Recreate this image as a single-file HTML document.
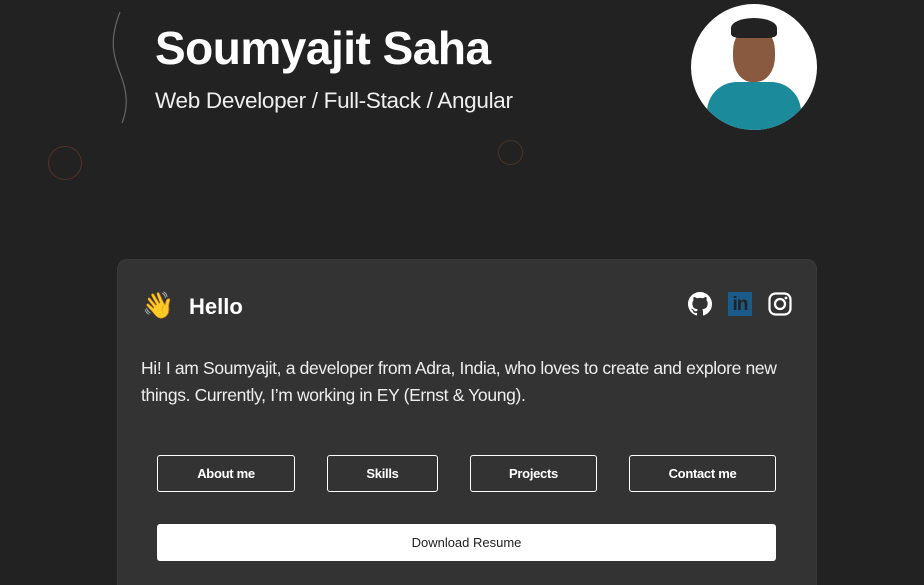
<!DOCTYPE html>
<html><head><style>
*{margin:0;padding:0;box-sizing:border-box}
html,body{width:924px;height:585px;overflow:hidden}
body{background:#222;position:relative;font-family:"Liberation Sans",sans-serif;color:#fff}
.abs{position:absolute}
h1{position:absolute;left:155px;top:21px;font-size:46px;font-weight:bold;letter-spacing:-0.5px}
.sub{position:absolute;left:155px;top:88px;font-size:22.5px;color:#eee;letter-spacing:-0.3px}
.avatar{position:absolute;left:691px;top:4px;width:126px;height:126px;border-radius:50%;background:#fff;overflow:hidden}
.card{position:absolute;left:117px;top:259px;width:700px;height:326px;background:#333;border-radius:10px 10px 0 0;border:1px solid #3a3a3a;border-bottom:none}
.btn{position:absolute;top:455px;height:37px;border:1px solid #fff;border-radius:3px;font-size:13px;font-weight:bold;display:flex;align-items:center;justify-content:center;letter-spacing:-0.3px}
</style></head><body>
<svg class="abs" style="left:110px;top:8px" width="30" height="120"><path d="M10 4 C0 30,2 45,10 65 C18 85,18 100,12 115" stroke="#666" stroke-width="1.2" fill="none"/></svg>
<div class="abs" style="left:48px;top:146px;width:34px;height:34px;border-radius:50%;border:1.5px solid #5a3024"></div>
<div class="abs" style="left:498px;top:140px;width:25px;height:25px;border-radius:50%;border:1.5px solid #4a3322"></div>
<h1>Soumyajit Saha</h1>
<div class="sub">Web Developer / Full-Stack / Angular</div>
<div class="avatar">
<div class="abs" style="left:16px;top:78px;width:94px;height:60px;background:#1b8a9a;border-radius:30px 30px 0 0"></div>
<div class="abs" style="left:42px;top:22px;width:42px;height:56px;background:#8a5a40;border-radius:45%"></div>
<div class="abs" style="left:40px;top:14px;width:46px;height:20px;background:#222;border-radius:50% 50% 20% 20%"></div>
</div>
<div class="card"></div>
<div class="abs" style="left:142px;top:290px;font-size:26px">👋</div>
<div class="abs" style="left:189px;top:294px;font-size:22px;font-weight:bold">Hello</div>
<svg class="abs" style="left:688px;top:292px" width="24" height="24" viewBox="0 0 16 16"><path fill="#fff" d="M8 0C3.58 0 0 3.58 0 8c0 3.540 2.290 6.530 5.470 7.590.4.07.55-.17.55-.38v-1.33c-2.23.48-2.7-1.07-2.7-1.07-.36-.93-.89-1.170-.89-1.170-.73-.5.06-.49.06-.49.8.06 1.23.83 1.23.83.71 1.22 1.87.87 2.33.66.07-.52.28-.87.5-1.070-1.780-.2-3.640-.89-3.640-3.950 0-.87.31-1.590.82-2.150-.08-.2-.36-1.020.08-2.120 0 0 .67-.21 2.2.82a7.6 7.6 0 014 0c1.53-1.040 2.2-.82 2.2-.82.44 1.1.16 1.920.08 2.120.51.56.82 1.270.82 2.150 0 3.070-1.870 3.750-3.650 3.950.29.25.54.73.54 1.480v2.2c0 .21.15.46.55.38A8.01 8.01 0 0016 8c0-4.42-3.58-8-8-8z"/></svg>
<div class="abs" style="left:728px;top:292px;width:24px;height:24px;background:#1a5b8a;color:#222;font-weight:bold;font-size:19px;line-height:26px;text-align:center;letter-spacing:-1px">in</div>
<svg class="abs" style="left:768px;top:292px" width="24" height="24" viewBox="0 0 24 24"><rect x="1.5" y="1.5" width="21" height="21" rx="6" fill="none" stroke="#fff" stroke-width="2.2"/><circle cx="12" cy="12" r="5" fill="none" stroke="#fff" stroke-width="2.2"/><circle cx="18" cy="6" r="1.4" fill="#fff"/></svg>
<div class="abs" style="left:141px;top:355px;width:660px;font-size:17.5px;line-height:27px;color:#eee;letter-spacing:-0.35px">Hi! I am Soumyajit, a developer from Adra, India, who loves to create and explore new things. Currently, I’m working in EY (Ernst &amp; Young).</div>
<div class="btn" style="left:157px;width:138px">About me</div>
<div class="btn" style="left:327px;width:111px">Skills</div>
<div class="btn" style="left:470px;width:127px">Projects</div>
<div class="btn" style="left:629px;width:147px">Contact me</div>
<div class="abs" style="left:157px;top:524px;width:619px;height:37px;background:#fff;border-radius:3px;color:#222;font-size:13px;display:flex;align-items:center;justify-content:center">Download Resume</div>
</body></html>
